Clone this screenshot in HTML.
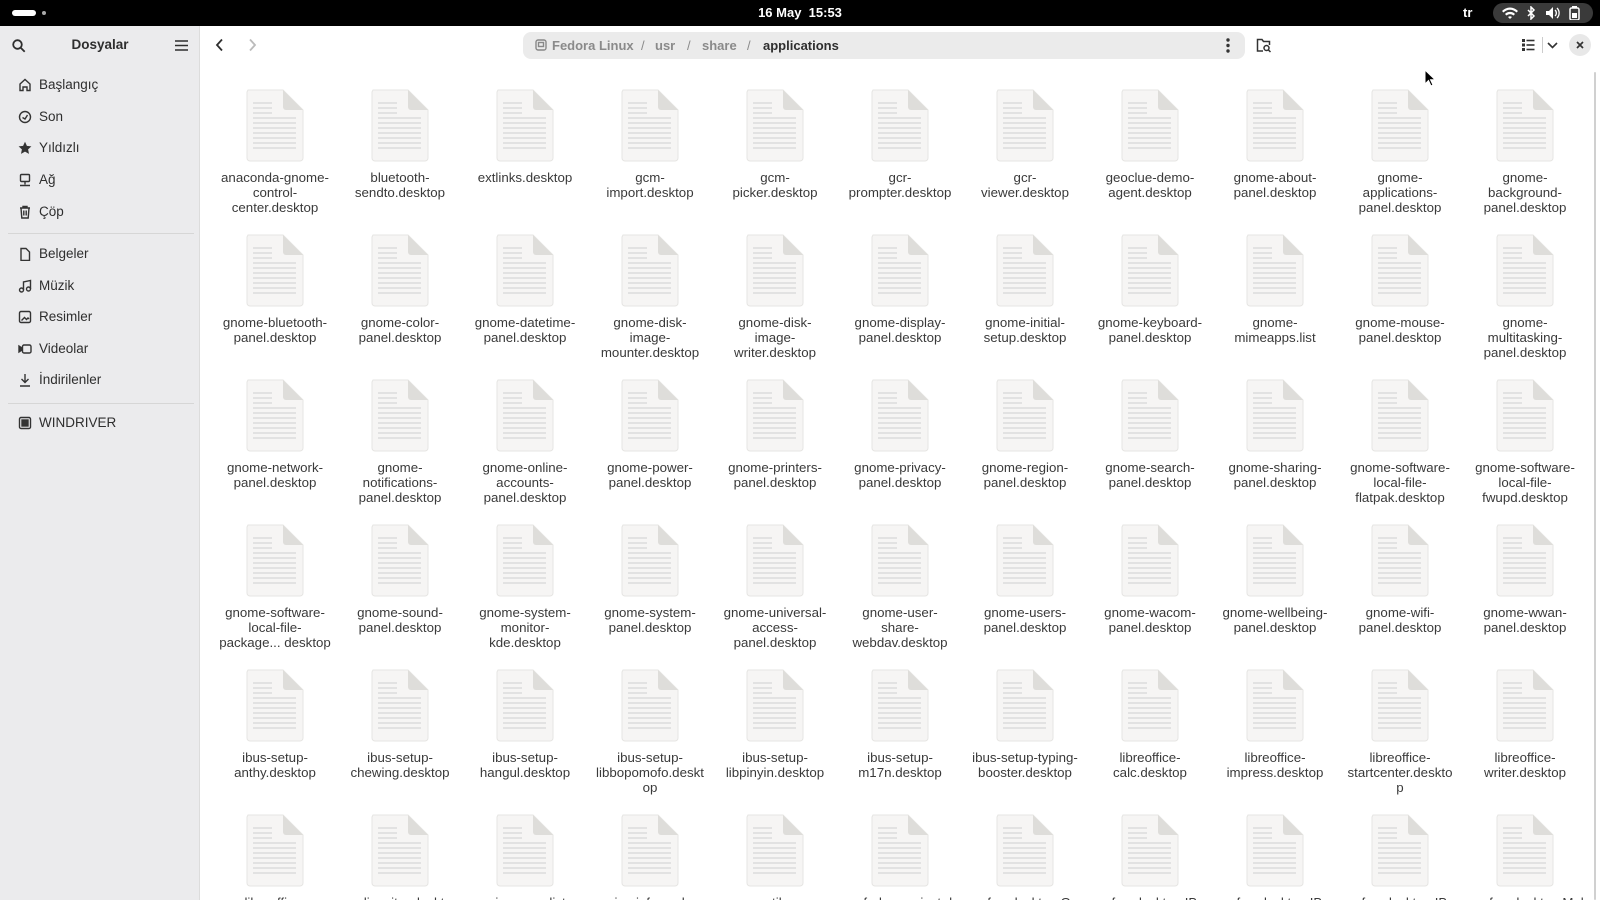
<!DOCTYPE html>
<html><head><meta charset="utf-8"><style>
*{margin:0;padding:0;box-sizing:border-box}
html{width:1600px;height:900px;overflow:hidden}
body{width:1600px;height:900px;overflow:hidden;background:#fff;font-family:"Liberation Sans","DejaVu Sans",sans-serif;position:relative}
#top{position:absolute;left:0;top:0;width:1600px;height:26px;background:#000;color:#fff}
#side{position:absolute;left:0;top:26px;width:200px;height:874px;background:#ebebed;border-right:1px solid #dcdcdc}
.si{position:absolute;left:18px;font-size:13.5px;color:#2e2e2e;display:flex;align-items:center;gap:7px}
.si svg{width:14px;height:14px}
.sep{position:absolute;left:8px;width:186px;height:1px;background:#d6d6d6}
.it{position:absolute;width:124px;text-align:center}
.it svg{display:block;margin:0 auto;width:60px;height:74px}
.it div{font-size:13.3px;line-height:15px;color:#3a3a3a;margin-top:8px;word-wrap:break-word}
</style></head><body>
<svg width="0" height="0" style="position:absolute"><defs>
<symbol id="doc" viewBox="0 0 60 74">
<path d="M3 2h35l20 20v48a3 3 0 0 1-3 3H5a3 3 0 0 1-3-3V4z" fill="#f6f5f4" stroke="#e6e5e3" stroke-width="1"/>
<path d="M38 2l20 20H41a3 3 0 0 1-3-3z" fill="#deddda"/>
<g stroke="#dcdcdc" stroke-width="1.4">
<path d="M8 15h19M8 20h19M8 25h19M8 30h43M8 35h43M8 40h43M8 45h43M8 50h43M8 55h43M8 60h43"/></g>
</symbol></defs></svg>

<div id="top">
 <div style="position:absolute;left:12px;top:10px;width:24px;height:6px;border-radius:3px;background:#fff"></div>
 <div style="position:absolute;left:42px;top:11px;width:4px;height:4px;border-radius:2px;background:#aaa"></div>
 <div style="position:absolute;left:0;width:1600px;top:5px;text-align:center;font-size:13px;font-weight:bold">16 May&nbsp; 15:53</div>
 <div style="position:absolute;left:1463px;top:5px;font-size:13px;font-weight:bold">tr</div>
 <div style="position:absolute;left:1493px;top:3px;width:100px;height:20px;border-radius:10px;background:#3a3a3a"></div>
 <svg style="position:absolute;left:1502px;top:6px" width="90" height="14" viewBox="0 0 90 14" fill="#fff">
  <path d="M0 5a11 11 0 0 1 16 0l-1.5 1.5a9 9 0 0 0-13 0zM3 8a7 7 0 0 1 10 0l-1.5 1.5a5 5 0 0 0-7 0zM8 13l-2-2a3 3 0 0 1 4 0z"/>
  <path d="M26 4l6 6-3 3V1l3 3-6 6" stroke="#fff" stroke-width="1.5" fill="none"/>
  <path d="M44 5h3l4-4v12l-4-4h-3z"/><path d="M53 4a4 4 0 0 1 0 6M55 2a7 7 0 0 1 0 10" stroke="#fff" stroke-width="1.3" fill="none"/>
  <rect x="68" y="2" width="9" height="12" rx="1.5" stroke="#fff" stroke-width="1.5" fill="none"/><rect x="70" y="0" width="5" height="2"/><rect x="70" y="7" width="5" height="5"/>
 </svg>
</div>

<div id="side">
 <svg style="position:absolute;left:12px;top:13px" width="14" height="14" viewBox="0 0 14 14" fill="none" stroke="#2e2e2e" stroke-width="1.8"><circle cx="5.5" cy="5.5" r="4.3"/><path d="M8.7 8.7l4 4"/></svg>
 <div style="position:absolute;left:0;width:200px;top:11px;text-align:center;font-size:13.5px;font-weight:bold;color:#2e2e2e">Dosyalar</div>
 <svg style="position:absolute;left:175px;top:14px" width="13" height="11" viewBox="0 0 13 11" stroke="#2e2e2e" stroke-width="1.6"><path d="M0 1h13M0 5.5h13M0 10h13"/></svg>
 <div class="si" style="top:51px"><svg viewBox="0 0 14 14" fill="none" stroke="#333" stroke-width="1.4"><path d="M2 6l5-4.5L12 6v6.5H9V9H5v3.5H2z"/></svg>Başlangıç</div>
 <div class="si" style="top:83px"><svg viewBox="0 0 14 14" fill="none" stroke="#333" stroke-width="1.4"><circle cx="7" cy="7" r="5.5"/><path d="M4.5 7.5L7 9l2.5-4"/></svg>Son</div>
 <div class="si" style="top:114px"><svg viewBox="0 0 14 14" fill="#333"><path d="M7 .8l1.9 4.1 4.5.5-3.3 3 .9 4.5L7 10.6 3 12.9l.9-4.5-3.3-3 4.5-.5z"/></svg>Yıldızlı</div>
 <div class="si" style="top:146px"><svg viewBox="0 0 14 14" fill="none" stroke="#333" stroke-width="1.4"><rect x="2.5" y="1.5" width="9" height="7" rx="1"/><path d="M7 8.5v3M2 12.5h10"/></svg>Ağ</div>
 <div class="si" style="top:178px"><svg viewBox="0 0 14 14" fill="none" stroke="#333" stroke-width="1.4"><path d="M2 3h10M5 3V1.5h4V3M3 3l.8 10h6.4L11 3M5.8 5.5v5M8.2 5.5v5"/></svg>Çöp</div>
 <div class="sep" style="top:207px"></div>
 <div class="si" style="top:220px"><svg viewBox="0 0 14 14" fill="none" stroke="#333" stroke-width="1.4"><path d="M3 1.5h5l3.5 3.5v8.5H3z"/></svg>Belgeler</div>
 <div class="si" style="top:252px"><svg viewBox="0 0 14 14" fill="none" stroke="#333" stroke-width="1.4"><circle cx="3.5" cy="11" r="2"/><circle cx="10.5" cy="10" r="2"/><path d="M5.5 11V3l7-1.5V10"/></svg>Müzik</div>
 <div class="si" style="top:283px"><svg viewBox="0 0 14 14" fill="none" stroke="#333" stroke-width="1.4"><rect x="1.5" y="1.5" width="11" height="11" rx="1.5"/><path d="M3.5 10.5l3-3 2 2 1.5-1.5 1 1" /></svg>Resimler</div>
 <div class="si" style="top:315px"><svg viewBox="0 0 14 14" fill="none" stroke="#333" stroke-width="1.4"><rect x="4.5" y="3" width="8.5" height="8" rx="1.5"/><path d="M1 4v6l3-2V6z" fill="#333"/></svg>Videolar</div>
 <div class="si" style="top:346px"><svg viewBox="0 0 14 14" fill="none" stroke="#333" stroke-width="1.4"><path d="M7 1v8.5M3.5 6l3.5 3.5L10.5 6M2 13h10"/></svg>İndirilenler</div>
 <div class="sep" style="top:377px"></div>
 <div class="si" style="top:389px"><svg viewBox="0 0 14 14" fill="none" stroke="#333" stroke-width="1.4"><rect x="1.5" y="1.5" width="11" height="11" rx="1.5"/><rect x="4" y="4" width="6" height="6" fill="#333"/></svg>WINDRIVER</div>
</div>

<svg style="position:absolute;left:214px;top:38px" width="12" height="14" viewBox="0 0 12 14" fill="none" stroke="#2e2e2e" stroke-width="1.8"><path d="M8 1.5L3 7l5 5.5"/></svg>
<svg style="position:absolute;left:246px;top:38px" width="12" height="14" viewBox="0 0 12 14" fill="none" stroke="#bbb" stroke-width="1.8"><path d="M4 1.5L9 7l-5 5.5"/></svg>
<div style="position:absolute;left:523px;top:32px;width:722px;height:27px;border-radius:8px;background:#ebebeb;font-size:13px;font-weight:bold;color:#8a8a8a;line-height:27px">
 <svg style="position:absolute;left:12px;top:7px" width="12" height="12" viewBox="0 0 12 12" fill="none" stroke="#888" stroke-width="1.4"><rect x="1" y="1" width="10" height="10" rx="2"/><rect x="3.5" y="3.5" width="5" height="4"/></svg>
 <span style="position:absolute;left:29px">Fedora Linux</span>
 <span style="position:absolute;left:118px;font-weight:normal">/</span>
 <span style="position:absolute;left:132px">usr</span>
 <span style="position:absolute;left:164px;font-weight:normal">/</span>
 <span style="position:absolute;left:179px">share</span>
 <span style="position:absolute;left:224px;font-weight:normal">/</span>
 <span style="position:absolute;left:240px;color:#2e2e2e">applications</span>
 <svg style="position:absolute;left:703px;top:6px" width="4" height="15" viewBox="0 0 4 15" fill="#333"><circle cx="2" cy="2" r="1.7"/><circle cx="2" cy="7.5" r="1.7"/><circle cx="2" cy="13" r="1.7"/></svg>
</div>
<svg style="position:absolute;left:1256px;top:38px" width="16" height="15" viewBox="0 0 16 15" fill="none" stroke="#333" stroke-width="1.5"><path d="M7 13H1.5V1.5h4.5l1.5 2h6V7"/><circle cx="10.5" cy="10" r="2.5"/><path d="M12.3 11.8l2.2 2.2"/></svg>
<svg style="position:absolute;left:1522px;top:39px" width="13" height="12" viewBox="0 0 13 12" fill="#333"><rect x="0" y="0" width="3" height="3"/><rect x="0" y="4.5" width="3" height="3"/><rect x="0" y="9" width="3" height="3"/><rect x="4.5" y=".7" width="8" height="1.6"/><rect x="4.5" y="5.2" width="8" height="1.6"/><rect x="4.5" y="9.7" width="8" height="1.6"/></svg>
<div style="position:absolute;left:1542px;top:37px;width:1px;height:16px;background:#ccc"></div>
<svg style="position:absolute;left:1547px;top:42px" width="11" height="7" viewBox="0 0 11 7" fill="none" stroke="#333" stroke-width="1.6"><path d="M1 1l4.5 4.5L10 1"/></svg>
<div style="position:absolute;left:1569px;top:34px;width:22px;height:22px;border-radius:11px;background:#e8e8e8"></div>
<svg style="position:absolute;left:1576px;top:41px" width="8" height="8" viewBox="0 0 8 8" stroke="#333" stroke-width="1.7"><path d="M1 1l6 6M7 1L1 7"/></svg>
<svg style="position:absolute;left:1424px;top:69px" width="11" height="18" viewBox="0 0 11 18"><path d="M1 1v14l3.5-3.5 2.5 5.5 2-1-2.5-5.3h4.5z" fill="#000" stroke="#fff" stroke-width="1"/></svg>
<div style="position:absolute;left:1594px;top:72px;width:2px;height:828px;background:#d0d0d0;border-radius:1px"></div>

<div id="grid" style="position:absolute;left:0;top:0;width:1600px;height:900px;overflow:hidden"></div>
<script>
var names=[
"anaconda-gnome-control-center.desktop","bluetooth-sendto.desktop","extlinks.desktop","gcm-import.desktop","gcm-picker.desktop","gcr-prompter.desktop","gcr-viewer.desktop","geoclue-demo-agent.desktop","gnome-about-panel.desktop","gnome-applications-panel.desktop","gnome-background-panel.desktop",
"gnome-bluetooth-panel.desktop","gnome-color-panel.desktop","gnome-datetime-panel.desktop","gnome-disk-image-mounter.desktop","gnome-disk-image-writer.desktop","gnome-display-panel.desktop","gnome-initial-setup.desktop","gnome-keyboard-panel.desktop","gnome-mimeapps.list","gnome-mouse-panel.desktop","gnome-multitasking-panel.desktop",
"gnome-network-panel.desktop","gnome-notifications-panel.desktop","gnome-online-accounts-panel.desktop","gnome-power-panel.desktop","gnome-printers-panel.desktop","gnome-privacy-panel.desktop","gnome-region-panel.desktop","gnome-search-panel.desktop","gnome-sharing-panel.desktop","gnome-software-local-file-flatpak.desktop","gnome-software-local-file-fwupd.desktop",
"gnome-software-local-file-package... desktop","gnome-sound-panel.desktop","gnome-system-monitor-kde.desktop","gnome-system-panel.desktop","gnome-universal-access-panel.desktop","gnome-user-share-webdav.desktop","gnome-users-panel.desktop","gnome-wacom-panel.desktop","gnome-wellbeing-panel.desktop","gnome-wifi-panel.desktop","gnome-wwan-panel.desktop",
"ibus-setup-anthy.desktop","ibus-setup-chewing.desktop","ibus-setup-hangul.desktop","ibus-setup-libbopomofo.desktop","ibus-setup-libpinyin.desktop","ibus-setup-m17n.desktop","ibus-setup-typing-booster.desktop","libreoffice-calc.desktop","libreoffice-impress.desktop","libreoffice-startcenter.desktop","libreoffice-writer.desktop",
"libreoffice-xsltfilter.desktop","mediawriter.desktop","mimeapps.list","mimeinfo.cache","nautilus-autorun.desktop","org.fedoraproject.desktop","org.freedesktop.GnomeApp","org.freedesktop.IBus.desktop","org.freedesktop.IBus.Panel","org.freedesktop.IBus.Setup","org.freedesktop.MalcontentControl"];
var fix={"anaconda-gnome-control-center.desktop":"anaconda-gnome-<br>control-<br>center.desktop","gcm-import.desktop":"gcm-<br>import.desktop","gcm-picker.desktop":"gcm-<br>picker.desktop","gcr-prompter.desktop":"gcr-<br>prompter.desktop","gcr-viewer.desktop":"gcr-<br>viewer.desktop","gnome-applications-panel.desktop":"gnome-<br>applications-<br>panel.desktop","gnome-background-panel.desktop":"gnome-<br>background-<br>panel.desktop","gnome-disk-image-mounter.desktop":"gnome-disk-<br>image-<br>mounter.desktop","gnome-disk-image-writer.desktop":"gnome-disk-<br>image-<br>writer.desktop","gnome-mimeapps.list":"gnome-<br>mimeapps.list","gnome-multitasking-panel.desktop":"gnome-<br>multitasking-<br>panel.desktop","gnome-notifications-panel.desktop":"gnome-<br>notifications-<br>panel.desktop","gnome-online-accounts-panel.desktop":"gnome-online-<br>accounts-<br>panel.desktop","gnome-software-local-file-flatpak.desktop":"gnome-software-<br>local-file-<br>flatpak.desktop","gnome-software-local-file-fwupd.desktop":"gnome-software-<br>local-file-<br>fwupd.desktop","gnome-software-local-file-package... desktop":"gnome-software-<br>local-file-<br>package... desktop","gnome-system-monitor-kde.desktop":"gnome-system-<br>monitor-<br>kde.desktop","gnome-universal-access-panel.desktop":"gnome-universal-<br>access-<br>panel.desktop","gnome-user-share-webdav.desktop":"gnome-user-<br>share-<br>webdav.desktop","ibus-setup-libbopomofo.desktop":"ibus-setup-<br>libbopomofo.deskt<br>op","libreoffice-startcenter.desktop":"libreoffice-<br>startcenter.deskto<br>p","ibus-setup-typing-booster.desktop":"ibus-setup-typing-<br>booster.desktop"};
var h="";
for(var i=0;i<names.length;i++){var r=Math.floor(i/11),c=i%11;
var n=names[i];var t=fix[n];
if(!t){var k=n.lastIndexOf("-");if(k>0&&n.length>15){t=n.slice(0,k+1)+"<br>"+n.slice(k+1);}else t=n;}
h+='<div class="it" style="left:'+(213+125*c)+'px;top:'+(88+145*r)+'px"><svg><use href="#doc"/></svg><div>'+t+'</div></div>';}
document.getElementById("grid").innerHTML=h;
</script>
</body></html>
